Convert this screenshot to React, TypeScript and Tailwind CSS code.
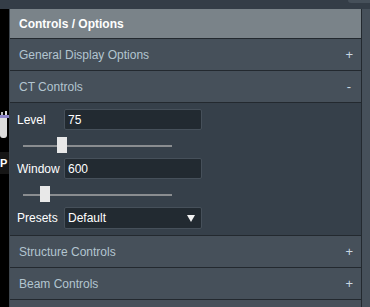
import React from "react";

function Row({ title, sign }: { title: string; sign: string }) {
  return (
    <div className="h-[32px] flex items-center justify-between pl-[9px] pr-[8px] bg-[#46505a] border-b border-[#23292f] text-[12px] text-[#b3c5d0]">
      <span>{title}</span>
      <span className={sign === "+" ? "text-[13px] font-light text-[#c9d9e2]" : "text-[13px] text-[#c9d9e2] pr-[2px]"}>{sign}</span>
    </div>
  );
}

function Slider({ pos }: { pos: number }) {
  return (
    <div className="relative h-[28px] ml-[6px] w-[149px]">
      <div className="absolute left-0 right-0 top-[15px] h-[2px] bg-[#8a8d90]" />
      <div
        className="absolute top-[7px] w-[10px] h-[16px] bg-[#e8e8e8]"
        style={{ left: pos }}
      />
    </div>
  );
}

export default function App() {
  return (
    <div
      className="w-[370px] h-[307px] overflow-hidden flex flex-col bg-[#343d47]"
      style={{ fontFamily: '"Liberation Sans", Arial, sans-serif' }}
    >
      <div className="h-[9px] bg-[#343d47] flex justify-end">
        <div className="w-[22px] h-[3px] bg-[#46505a] rounded-bl-[4px]" />
      </div>
      <div className="flex flex-1 min-h-0">
        <div className="w-[9px] bg-black flex flex-col">
          <div className="h-[96px]" />
          <div className="h-[10px] flex items-end px-[1px] gap-[2px]">
            <div className="w-[2px] h-[3px] bg-[#bbb]" />
            <div className="w-[2px] h-[4px] bg-[#ddd]" />
          </div>
          <div className="h-[3px] bg-[#8c84c8]" />
          <div className="h-[24px] flex">
            <div className="w-[7px] h-[20px] bg-[#dcdcdc] rounded-b-[3px]" />
          </div>
          <div className="h-[10px]" />
          <div className="h-[22px] bg-[#161616] text-white text-[11px] font-bold leading-[22px]">P</div>
        </div>
        <div className="w-[1px] bg-[#3d454d]" />
        <div className="flex-1 flex flex-col bg-[#36404a]">
          <div className="h-[30px] flex items-center pl-[9px] bg-[#7a8389] border-b border-[#23292f] text-white font-bold text-[12px]">
            Controls / Options
          </div>
          <Row title="General Display Options" sign="+" />
          <Row title="CT Controls" sign="-" />
          <div className="pl-[7px] pt-[6px] pb-[6px] bg-[#36404a] border-b border-[#23292f] flex flex-col">
            <div className="flex items-center h-[21px]">
              <span className="w-[47px] text-white text-[12px]">Level</span>
              <div className="w-[138px] h-[21px] bg-[#222a31] border border-[#46505a] rounded-[2px] flex items-center pl-[3px] text-white text-[12px]">
                75
              </div>
            </div>
            <Slider pos={34} />
            <div className="flex items-center h-[21px]">
              <span className="w-[47px] text-white text-[12px]">Window</span>
              <div className="w-[138px] h-[21px] bg-[#222a31] border border-[#46505a] rounded-[2px] flex items-center pl-[3px] text-white text-[12px]">
                600
              </div>
            </div>
            <Slider pos={17} />
            <div className="flex items-center h-[22px]">
              <span className="w-[47px] text-white text-[12px]">Presets</span>
              <div className="w-[138px] h-[22px] bg-[#222a31] border border-[#46505a] rounded-[2px] flex items-center justify-between pl-[3px] pr-[6px] text-white text-[12px]">
                <span>Default</span>
                <svg width="8" height="7" viewBox="0 0 8 7">
                  <polygon points="0,0 8,0 4,7" fill="#f2f2f2" />
                </svg>
              </div>
            </div>
          </div>
          <Row title="Structure Controls" sign="+" />
          <Row title="Beam Controls" sign="+" />
          <div className="flex-1 bg-[#46505a]" />
        </div>
        <div className="w-[1px] bg-[#23292f]" />
        <div className="w-[8px] bg-[#46505a]" />
      </div>
    </div>
  );
}
